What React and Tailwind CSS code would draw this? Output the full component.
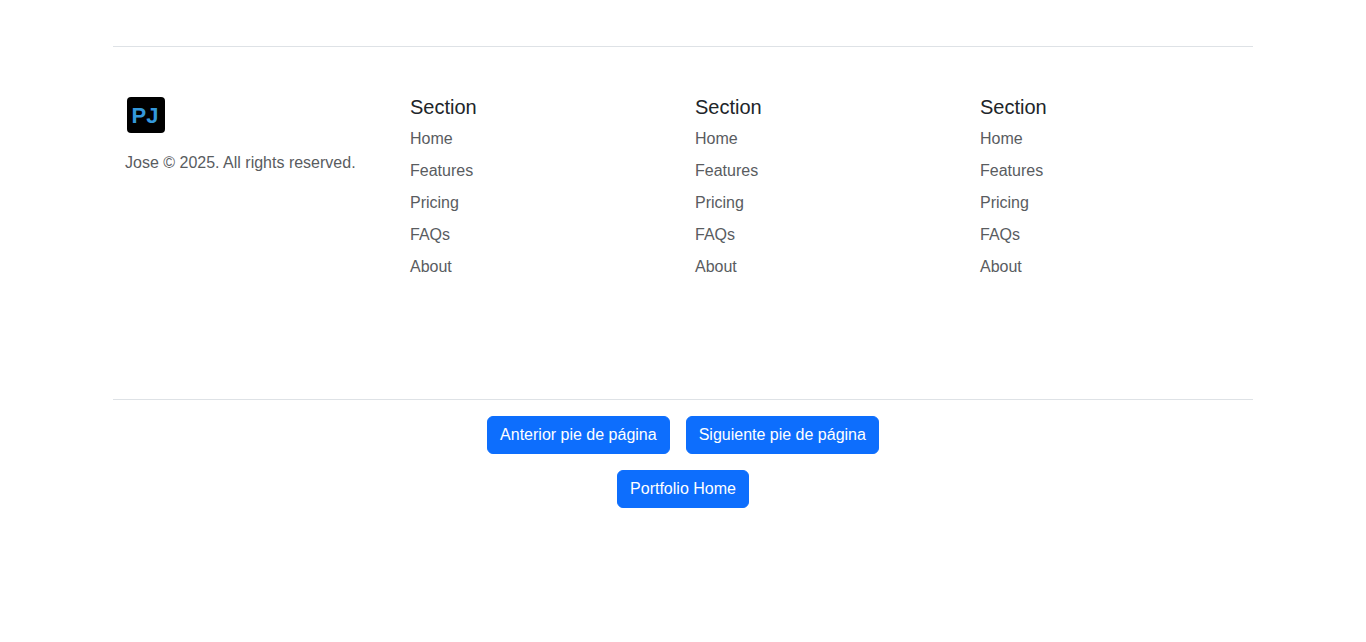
const links = ["Home", "Features", "Pricing", "FAQs", "About"];

function Logo() {
  return (
    <svg viewBox="0 0 40 40" className="h-10 w-10" role="img" aria-label="PJ">
      <rect x="2" y="2" width="38" height="36" rx="4" fill="#000" />
      <text x="20" y="28" textAnchor="middle" fontSize="22" fontWeight="700" fill="#3498db" className="font-['Liberation_Sans',sans-serif]">PJ</text>
    </svg>
  );
}

function LinkColumn() {
  return (
    <div className="px-3">
      <h5 className="mb-2 text-xl leading-6 font-normal text-[#212529]">Section</h5>
      <ul className="flex flex-col gap-2">
        {links.map((label) => (
          <li key={label} className="leading-6">
            <a href="#" className="block text-[#595c5f]">{label}</a>
          </li>
        ))}
      </ul>
    </div>
  );
}

const button = "rounded-md border border-[#0d6efd] bg-[#0d6efd] px-3 py-1.5 leading-6 text-white";

export default function App() {
  return (
    <div className="bg-white font-['Liberation_Sans',Arial,sans-serif] text-base">
      <div className="mx-auto max-w-[1164px] px-3">
        <footer className="mt-[46px] mb-12 grid grid-cols-4 border-t border-[#dee2e6] pt-12 pb-[72px]">
          <div className="px-3">
            <a href="#" className="mb-4 inline-block align-top" aria-label="PJ">
              <Logo />
            </a>
            <p className="leading-6 text-[#595c5f]">Jose © 2025. All rights reserved.</p>
          </div>
          <LinkColumn />
          <LinkColumn />
          <LinkColumn />
        </footer>
        <nav className="flex flex-col items-center gap-4 border-t border-[#dee2e6] pt-4">
          <div className="flex gap-4">
            <button type="button" className={button}>Anterior pie de página</button>
            <button type="button" className={button}>Siguiente pie de página</button>
          </div>
          <button type="button" className={button}>Portfolio Home</button>
        </nav>
      </div>
    </div>
  );
}
